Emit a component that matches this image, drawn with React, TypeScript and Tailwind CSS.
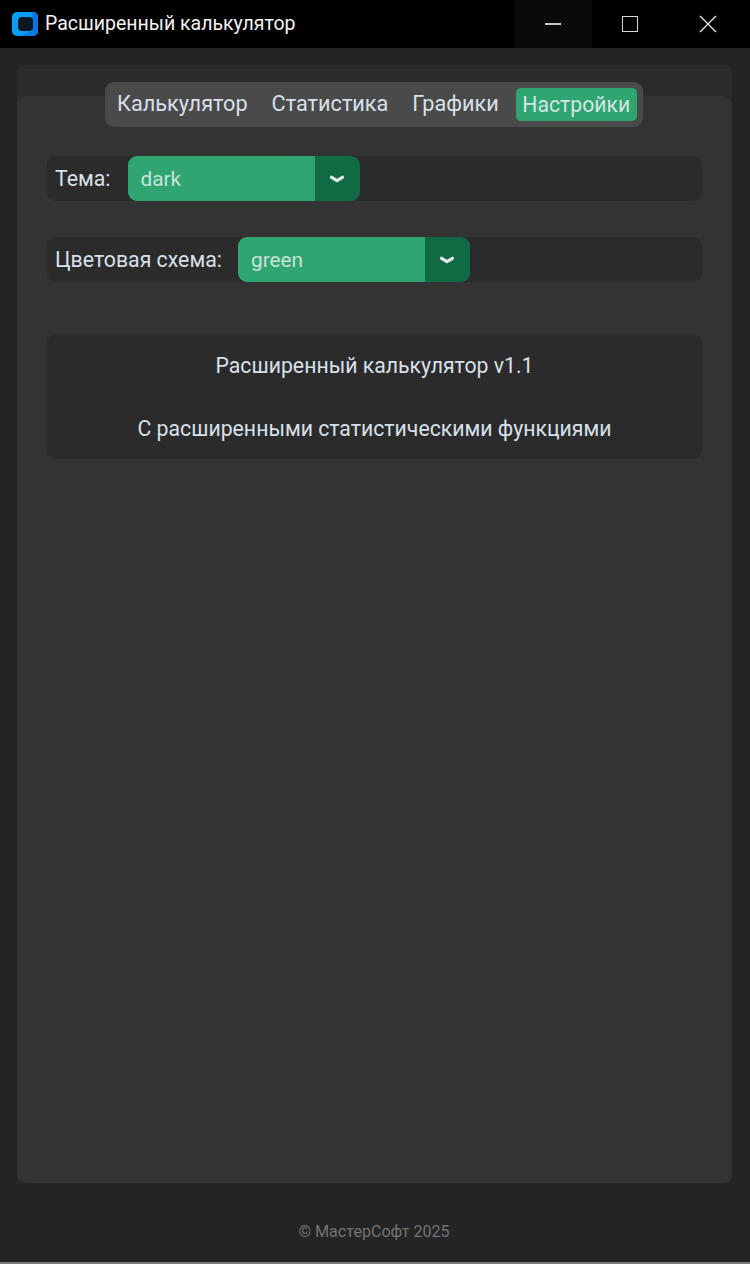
import React from "react";

function Chevron() {
  return (
    <svg className="mt-[2px]" width="16" height="9" viewBox="0 0 16 9" fill="none">
      <path d="M2.6 2.4 L8 5.6 L13.4 2.4" stroke="#e2e8e4" strokeWidth="3.4" strokeLinecap="round" strokeLinejoin="round" />
    </svg>
  );
}

function Select({ value }: { value: string }) {
  return (
    <div className="flex h-[45px] w-[232px] overflow-hidden rounded-[9px]">
      <div className="flex flex-1 items-center bg-[#2fa572] pl-[13px] pt-[2px] text-[20.8px] text-[#c9e2d9]">{value}</div>
      <div className="flex w-[45px] items-center justify-center bg-[#106a43]">
        <Chevron />
      </div>
    </div>
  );
}

function Row({ label, value, gap, className }: { label: string; value: string; gap: string; className?: string }) {
  return (
    <div className={`flex h-[45px] items-center rounded-[9px] bg-[#2b2b2b] pl-[8px] ${className ?? ""}`}>
      <span className={`${gap} pt-[1px] text-[21.3px] text-[#d8e0ea]`}>{label}</span>
      <Select value={value} />
    </div>
  );
}

export default function App() {
  return (
    <div className="flex h-[1264px] w-[750px] flex-col overflow-hidden bg-[#242424] font-['Roboto',sans-serif]">
      <header className="flex h-[48px] shrink-0 items-center bg-black">
        <svg className="ml-[12px]" width="26" height="24" viewBox="0 0 26 24">
          <rect x="0" y="0" width="26" height="24" rx="5" fill="#0a9cf5" />
          <path d="M20 0 h1 a5 5 0 0 1 5 5 v14 a5 5 0 0 1 -5 5 h-12 l11 -5 z" fill="#0678e0" />
          <rect x="6" y="5" width="15" height="14" rx="4" fill="#0c1620" />
        </svg>
        <span className="ml-[7px] text-[19.5px] text-[#f2f2f2]">Расширенный калькулятор</span>
        <div className="ml-auto flex h-full">
          <div className="flex h-full w-[78px] items-center justify-center bg-[#0a0a0a]">
            <div className="h-[2px] w-[16px] bg-[#c8c8c8]" />
          </div>
          <div className="flex h-full w-[76px] items-center justify-center">
            <div className="h-[16px] w-[16px] border-[1.5px] border-[#d8d8d8]" />
          </div>
          <div className="flex h-full w-[82px] items-center justify-center pr-[2px]">
            <svg width="18" height="18" viewBox="0 0 18 18" fill="none">
              <path d="M1 1 L17 17 M17 1 L1 17" stroke="#e4e4e4" strokeWidth="1.3" />
            </svg>
          </div>
        </div>
      </header>

      <main className="relative ml-[17px] mr-[18px] mt-[17px] flex h-[1118px] shrink-0 flex-col rounded-[6px] bg-[#2b2b2b] pt-[31px]">
        <div className="flex-1 rounded-[9px] bg-[#333333] px-[30px] pt-[60px]">
          <Row label="Тема:" value="dark" gap="mr-[17px]" />
          <Row label="Цветовая схема:" value="green" gap="mr-[16px]" className="mt-[36px]" />
          <div className="mt-[52px] flex h-[125px] flex-col items-center rounded-[9px] bg-[#2b2b2b] pt-[18px] text-[21.25px] leading-[28px] text-[#d8e0ea]">
            <span>Расширенный калькулятор v1.1</span>
            <span className="mt-[35px]">С расширенными статистическими функциями</span>
          </div>
        </div>

        <nav className="absolute left-[88px] top-[17px] flex h-[45px] w-[538px] items-center rounded-[9px] bg-[#4a4a4a] px-[5px] text-[21.7px] text-[#d8e0ea]">
          <span className="ml-[7px]">Калькулятор</span>
          <span className="ml-[24px]">Статистика</span>
          <span className="ml-[24px]">Графики</span>
          <span className="ml-[17px] flex h-[33px] w-[121px] items-center justify-center rounded-[5px] bg-[#2fa572] text-[21.2px] text-[#d3e6e2]">Настройки</span>
        </nav>
      </main>

      <footer className="flex flex-1 items-start justify-center pt-[39px] pr-[2px] text-[16.1px] leading-[20px] text-[#737373]">
        © МастерСофт 2025
      </footer>
      <div className="h-[2px] shrink-0 bg-[#7a7a7a]" />
    </div>
  );
}
